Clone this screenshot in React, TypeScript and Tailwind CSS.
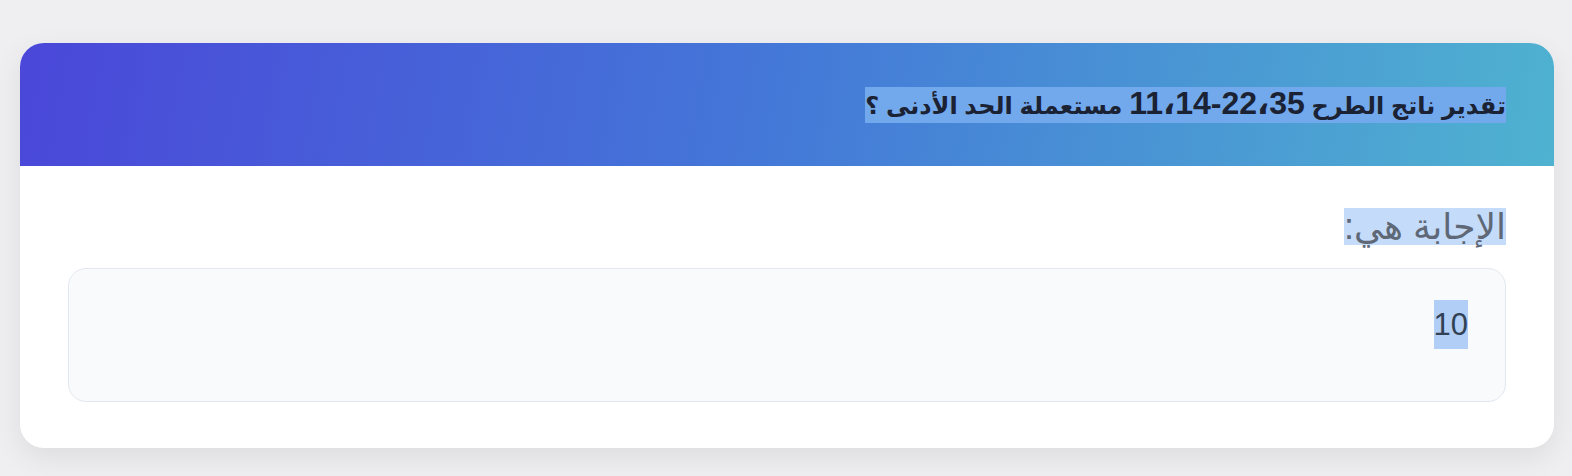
import React from 'react';

const RLM = '\u200F';

export default function App() {
  return (
    <div
      dir="rtl"
      className="h-screen w-full overflow-hidden bg-[#efeff1] pl-5 pr-[18px] pt-[43px]"
      style={{ fontFamily: '"Liberation Sans", "DejaVu Sans", sans-serif' }}
    >
      <div className="overflow-hidden rounded-[24px] bg-white shadow-[0_10px_30px_rgba(0,0,0,0.08)]">
        {/* header */}
        <div className="flex h-[123px] items-center bg-[linear-gradient(100deg,#4a47d9_0%,#4479d8_50%,#4fb2d0_100%)] px-12">
          <h2 className="w-fit bg-[#72a8ec] text-[24px] leading-[35px] font-bold text-[#1a2233]">
            تقدير ناتج الطرح{' '}
            <span className="text-[32px] leading-none">{`35${RLM}،${RLM}22${RLM}-${RLM}14${RLM}،${RLM}11`}</span>{' '}
            مستعملة الحد الأدنى ؟
          </h2>
        </div>

        {/* body */}
        <div className="px-12 pt-[42px] pb-[46px]">
          <p className="w-fit bg-[#c4dcfa] text-[36px] leading-[37px] text-[#5f6877]">الإجابة هي:</p>
          <div className="mt-[23px] h-[134px] rounded-[18px] border border-[#e2e8f0] bg-[#f8fafc] px-[37px] pt-[31px]">
            <div className="w-fit bg-[#b1cff6] text-[31px] leading-[49px] text-[#334155]">10</div>
          </div>
        </div>
      </div>
    </div>
  );
}
